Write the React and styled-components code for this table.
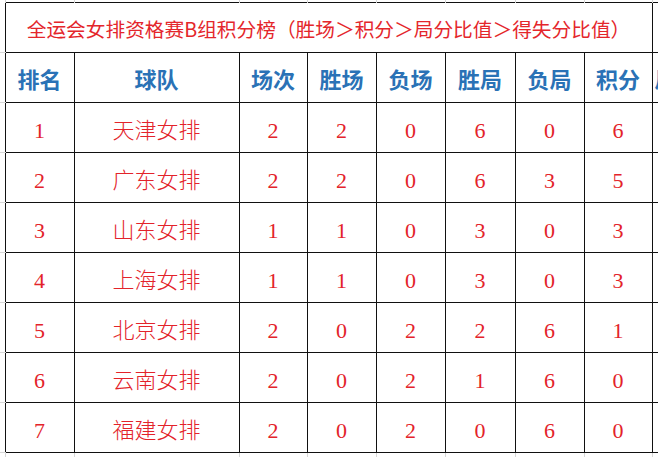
import React from "react";
import styled, { createGlobalStyle } from "styled-components";

const Global = createGlobalStyle`
  html, body { margin: 0; padding: 0; background: #ffffff; }
  body { overflow: hidden; }
`;

const Page = styled.div`
  width: 658px;
  height: 457px;
  overflow: hidden;
  background: #ffffff;
`;

const Sheet = styled.table`
  border-collapse: collapse;
  table-layout: fixed;
  width: 700px;
  border-spacing: 0;
`;

const GRID = "#d6d6d6";
const LINE = "#111111";

const TopGap = styled.td`
  height: ${(p) => p.$h}px;
  padding: 0;
  border: none;
  border-right: 1px solid ${GRID};
`;

const SideGap = styled.td`
  padding: 0;
  border: none;
  border-bottom: 1px solid ${GRID};
`;

const Cell = styled.td`
  border: 1px solid ${LINE};
  padding: 0;
  height: 49px;
  text-align: center;
  vertical-align: middle;
  white-space: nowrap;
  overflow: hidden;
`;

const TitleCell = styled(Cell)`
  font-family: "Noto Sans CJK SC", sans-serif;
  font-size: 19.7px;
  color: #e4262b;
  line-height: 1;
  padding-top: 2px;
  height: 47px;
`;

const HeadCell = styled(Cell)`
  font-family: "Noto Sans CJK SC", sans-serif;
  font-weight: 700;
  font-size: 22px;
  color: #2a72b6;
  line-height: 1;
  text-align: ${(p) => (p.$left ? "left" : "center")};
  padding-left: ${(p) => (p.$left ? "2px" : "0")};
`;

const BodyCell = styled(Cell)`
  font-family: "Liberation Serif", "Noto Sans CJK SC", serif;
  font-weight: 300;
  font-size: 22px;
  color: #e3232a;
  line-height: 1;
  padding-top: 6px;
  height: 43px;
`;

const widths = [5, 69, 165, 68, 69, 69, 70, 69, 68, 68];
const headers = ["排名", "球队", "场次", "胜场", "负场", "胜局", "负局", "积分"];
const rows = [
  [1, "天津女排", 2, 2, 0, 6, 0, 6],
  [2, "广东女排", 2, 2, 0, 6, 3, 5],
  [3, "山东女排", 1, 1, 0, 3, 0, 3],
  [4, "上海女排", 1, 1, 0, 3, 0, 3],
  [5, "北京女排", 2, 0, 2, 2, 6, 1],
  [6, "云南女排", 2, 0, 2, 1, 6, 0],
  [7, "福建女排", 2, 0, 2, 0, 6, 0],
];

export default function App() {
  return (
    <Page>
      <Global />
      <Sheet>
        <colgroup>
          {widths.map((w, i) => (
            <col key={i} style={{ width: w }} />
          ))}
        </colgroup>
        <tbody>
          <tr>
            {widths.map((_, i) => (
              <TopGap key={i} $h={2} />
            ))}
          </tr>
          <tr>
            <SideGap />
            <TitleCell colSpan={8}>
              全运会女排资格赛B组积分榜（胜场＞积分＞局分比值＞得失分比值）
            </TitleCell>
            <Cell />
          </tr>
          <tr>
            <SideGap />
            {headers.map((h) => (
              <HeadCell key={h}>{h}</HeadCell>
            ))}
            <HeadCell $left>局分比值</HeadCell>
          </tr>
          {rows.map((r) => (
            <tr key={r[0]}>
              <SideGap />
              {r.map((v, i) => (
                <BodyCell key={i}>{v}</BodyCell>
              ))}
              <BodyCell />
            </tr>
          ))}
          <tr>
            {widths.map((_, i) => (
              <TopGap key={i} $h={10} />
            ))}
          </tr>
        </tbody>
      </Sheet>
    </Page>
  );
}
